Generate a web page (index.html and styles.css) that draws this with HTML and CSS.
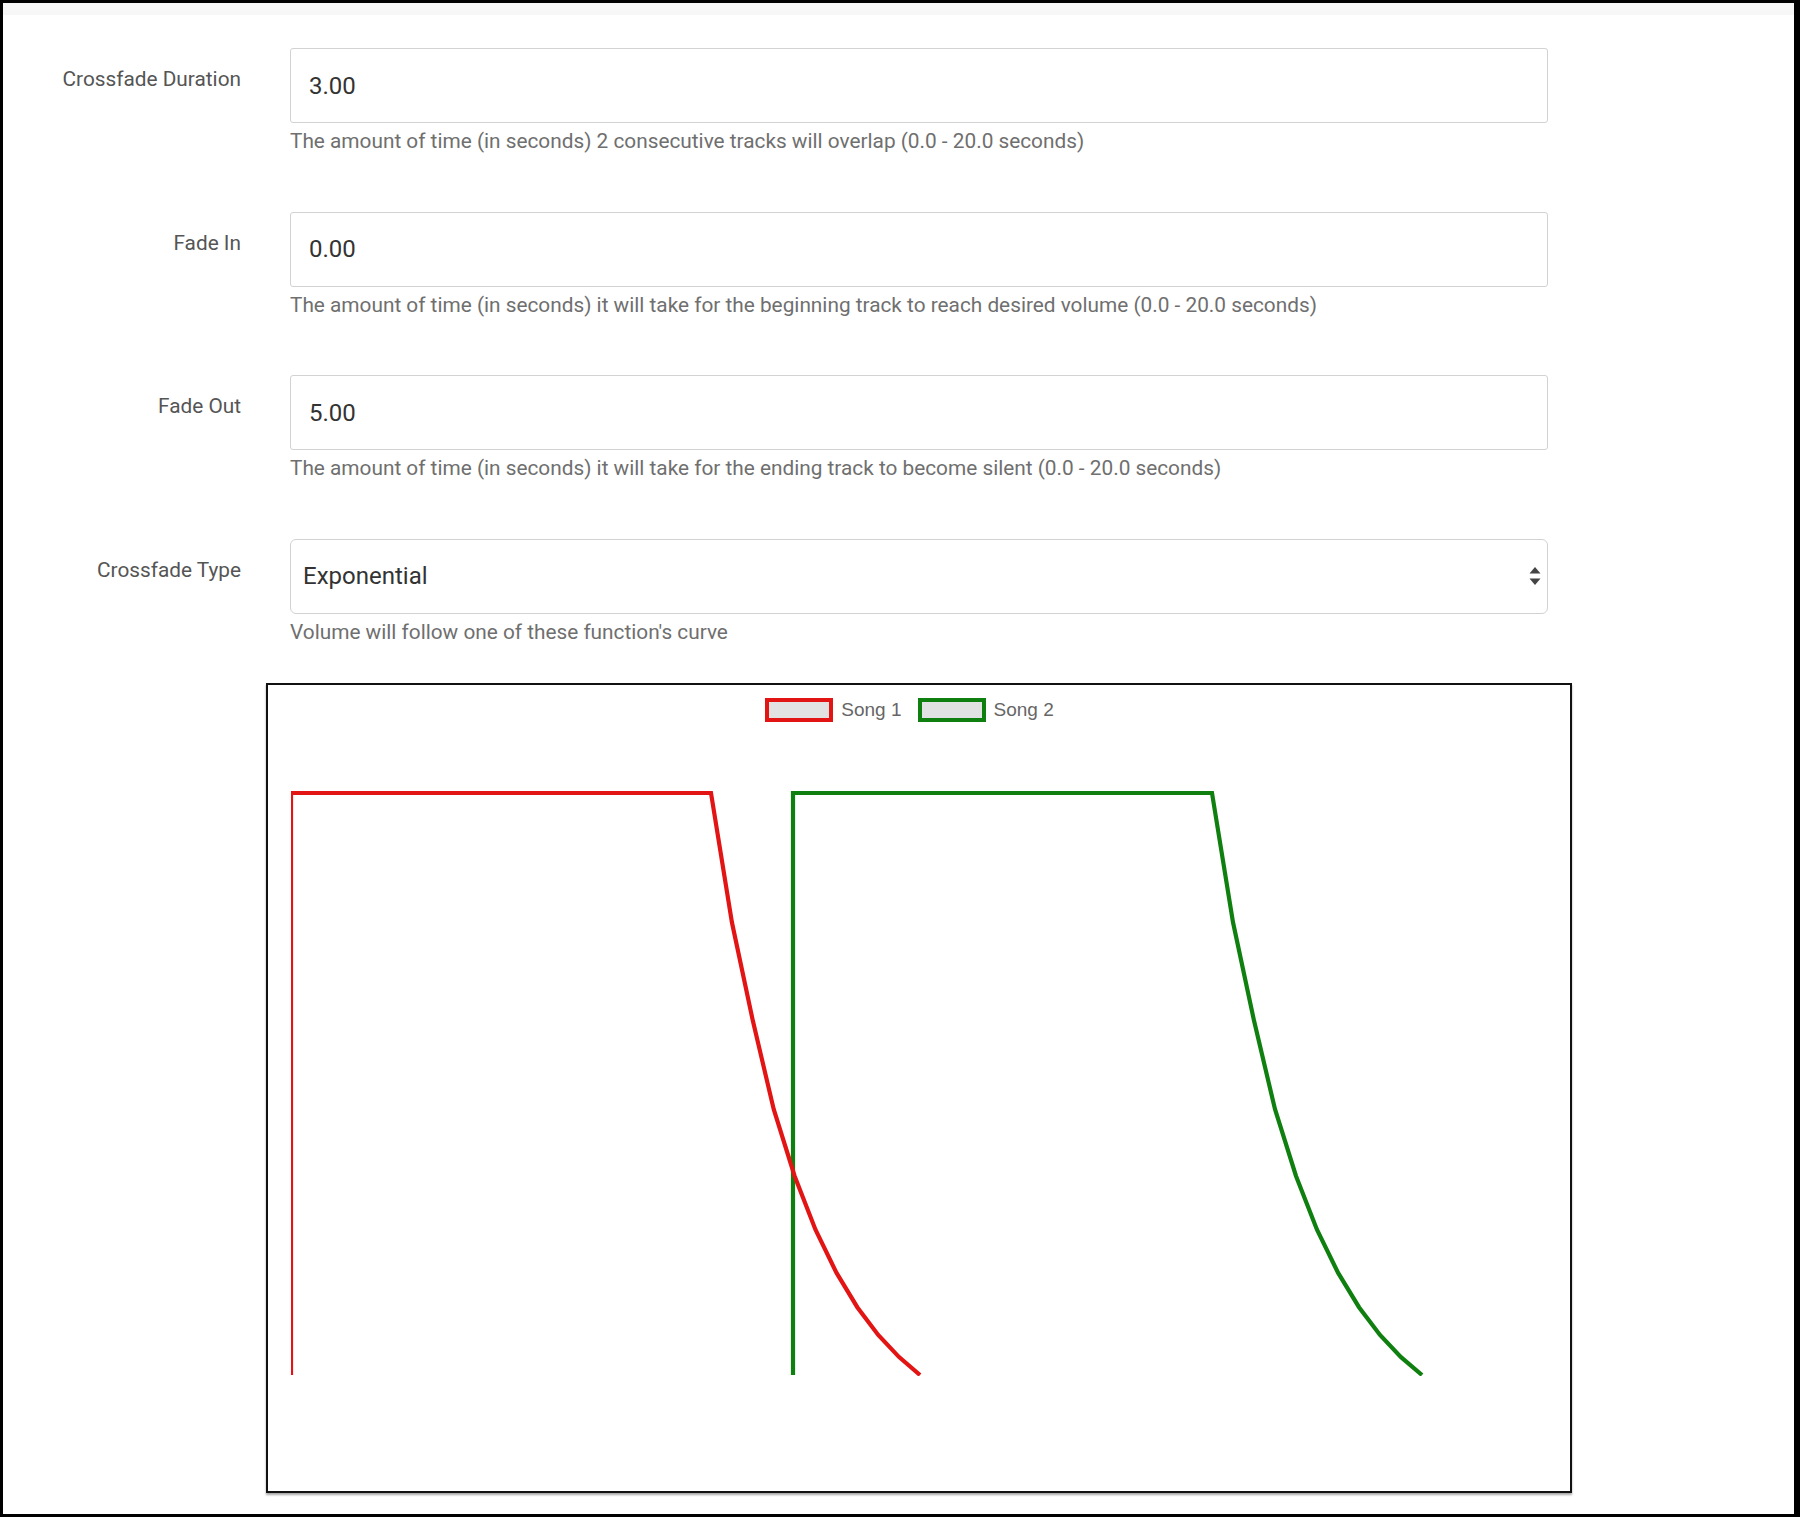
FILE: index.html
```html
<!DOCTYPE html>
<html lang="en">
<head>
<meta charset="utf-8">
<title>Crossfade settings</title>
<link rel="stylesheet" href="styles.css">
</head>
<body>
<div class="frame">
  <div class="topband"></div>
  <form class="form">
    <div class="row">
      <label class="label">Crossfade Duration</label>
      <div class="field">
        <input class="control" type="text" value="3.00">
        <div class="help">The amount of time (in seconds) 2 consecutive tracks will overlap (0.0 - 20.0 seconds)</div>
      </div>
    </div>
    <div class="row">
      <label class="label">Fade In</label>
      <div class="field">
        <input class="control" type="text" value="0.00">
        <div class="help">The amount of time (in seconds) it will take for the beginning track to reach desired volume (0.0 - 20.0 seconds)</div>
      </div>
    </div>
    <div class="row">
      <label class="label">Fade Out</label>
      <div class="field">
        <input class="control" type="text" value="5.00">
        <div class="help">The amount of time (in seconds) it will take for the ending track to become silent (0.0 - 20.0 seconds)</div>
      </div>
    </div>
    <div class="row last">
      <label class="label">Crossfade Type</label>
      <div class="field">
        <div class="select">
          <span class="select-text">Exponential</span>
          <svg class="select-arrows" width="12" height="20" viewBox="0 0 12 20">
            <polygon points="0.5,7.5 6,1 11.5,7.5" fill="#444"/>
            <polygon points="0.5,12.5 11.5,12.5 6,19" fill="#444"/>
          </svg>
        </div>
        <div class="help">Volume will follow one of these function's curve</div>
      </div>
    </div>
  </form>
  <div class="chart">
    <div class="legend">
      <div class="legend-item"><span class="swatch swatch-red"></span><span class="legend-text">Song 1</span></div>
      <div class="legend-item"><span class="swatch swatch-green"></span><span class="legend-text">Song 2</span></div>
    </div>
    <svg class="plot" width="1302" height="756" viewBox="0 0 1302 756">
      <defs>
        <clipPath id="area"><rect x="23" y="0" width="1279" height="641"/></clipPath>
      </defs>
      <g clip-path="url(#area)" fill="none" stroke-width="4.2" stroke-linejoin="miter">
        <polyline stroke="#0f800f" points="525,640 525,58 944,58 965,187.3 986,285.6 1007,374.2 1028,441 1049,494.7 1070,537.7 1091,572.2 1112,600 1133,622.1 1154,640"/>
        <polyline stroke="#e21414" points="23,640 23,58 443,58 463.9,187.3 484.8,285.6 505.7,374.2 526.6,441 547.5,494.7 568.4,537.7 589.3,572.2 610.2,600 631.1,622.1 652,640"/>
      </g>
    </svg>
  </div>
</div>
</body>
</html>
```
FILE: styles.css
```css
html, body {
  margin: 0;
  padding: 0;
  background: #fff;
}

.frame {
  box-sizing: border-box;
  width: 1800px;
  height: 1517px;
  border: 3px solid #000;
  border-right-width: 6px;
  overflow: hidden;
  font-family: Roboto, "Noto Sans", sans-serif;
  background: #fff;
}

.topband {
  height: 12px;
  background: #f7f7f7;
}

.form {
  margin: 0;
  padding-top: 33px;
}

.row {
  display: grid;
  grid-template-columns: 238px 1258px;
  column-gap: 49px;
  margin-bottom: 56.5px;
}

.row.last {
  margin-bottom: 37.5px;
}

.label {
  text-align: right;
  font-size: 20.8px;
  line-height: 28px;
  padding-top: 17px;
  color: #555;
}

.control {
  display: block;
  box-sizing: border-box;
  width: 100%;
  height: 75px;
  margin: 0;
  padding: 0 18px;
  border: 1px solid #d2d2d2;
  border-radius: 3px;
  background: #fff;
  font-family: Roboto, "Noto Sans", sans-serif;
  font-size: 24px;
  color: #333;
  outline: none;
}

.select {
  box-sizing: border-box;
  height: 75px;
  display: flex;
  align-items: center;
  padding: 0 6px 0 12px;
  border: 1px solid #d2d2d2;
  border-radius: 6px;
  background: #fff;
}

.select-text {
  font-size: 24px;
  color: #333;
}

.select-arrows {
  margin-left: auto;
  display: block;
}

.help {
  margin-top: 4px;
  font-size: 20.8px;
  line-height: 28px;
  color: #6f6f6f;
}

.chart {
  box-sizing: border-box;
  margin-left: 263px;
  width: 1306px;
  height: 810px;
  border: 2px solid #111;
  box-shadow: 0 2px 2px rgba(0, 0, 0, 0.35);
  background: #fff;
}

.legend {
  height: 50px;
  box-sizing: border-box;
  padding: 13px 19px 13px 0;
  display: flex;
  justify-content: center;
  align-items: flex-start;
  gap: 16px;
}

.legend-item {
  display: flex;
  align-items: center;
  height: 24px;
}

.swatch {
  box-sizing: border-box;
  width: 68px;
  height: 24px;
  border: 4px solid;
  background: #e2e2e2;
}

.swatch-red {
  border-color: #e21414;
}

.swatch-green {
  border-color: #0f800f;
}

.legend-text {
  margin-left: 8px;
  font-family: "Liberation Sans", Arial, sans-serif;
  font-size: 19px;
  color: #666;
}

.plot {
  display: block;
}
```
